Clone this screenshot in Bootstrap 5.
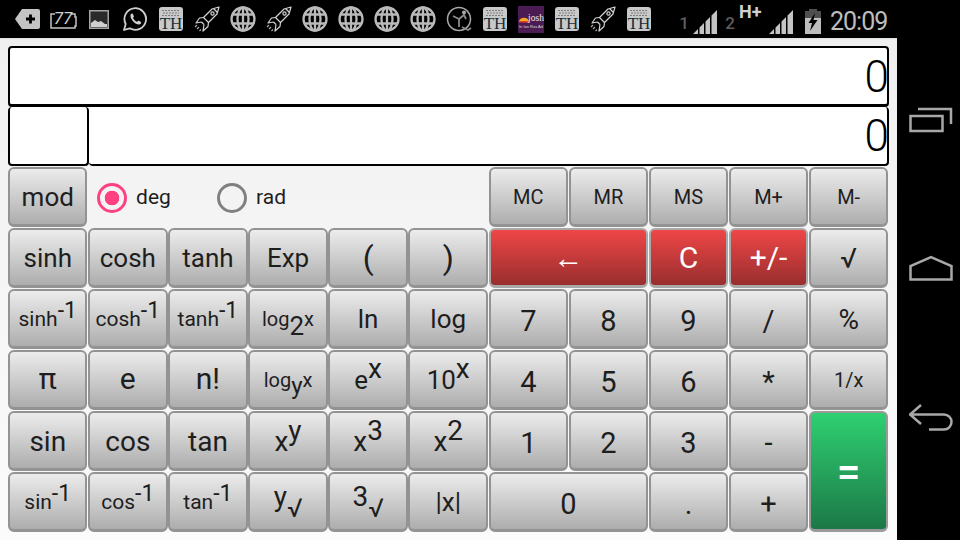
<!DOCTYPE html>
<html lang="en">
<head>
<meta charset="UTF-8" />
<meta name="viewport" content="width=device-width, initial-scale=1" />
<title>Calculator</title>
<link href="https://cdn.jsdelivr.net/npm/bootstrap@5.3.0/dist/css/bootstrap.min.css" rel="stylesheet" />
<style>
  html, body { width: 960px; height: 540px; overflow: hidden; background: #000; }
  body { font-family: Roboto, "Liberation Sans", sans-serif; color: #1e1e1e; }
  .status-bar { height: 38px; background: #000; padding-left: 9px; }
  .st-slot { width: 36px; height: 38px; }
  .st-slot svg { display: block; }
  .sig-num { width: 10px; font-size: 17px; font-weight: 500; color: #5e5e5e; line-height: 1; text-align: center; }
  .sig-first { margin-left: 22px; }
  .net-type { font-size: 18px; font-weight: 700; color: #d0d0d0; line-height: 1; width: 26px; margin-top: -14px; }
  .batt { margin-left: 12px; }
  .clock { font-size: 25px; letter-spacing: -1px; color: #bdbdbd; line-height: 1; width: 60px; margin-left: 9px; }
  .app-area { width: 897px; height: 502px; padding: 8px 8px 0; background: linear-gradient(#f0f0f0, #fbfbfb); box-shadow: inset 0 3px 2px -2px #ddd; }
  .nav-rail { width: 63px; height: 502px; background: #000; }
  .nav-rail svg { display: block; }
  .nav-slot { position: absolute; left: 12px; }
  .nav-recent { top: 69px; }
  .nav-home { top: 217px; }
  .nav-back { top: 366px; }
  .readout { background: #fff; border: 2px solid #000; border-radius: 4px; font-size: 44px; font-weight: 300; color: #000; line-height: 1; letter-spacing: -2px; text-align: right; }
  .readout-top { height: 61px; border-bottom-width: 3px; padding-top: 7px; }
  .readout-row { height: 59px; margin-bottom: 1px; }
  .readout-row .readout { border-top: 0; padding-top: 7px; }
  .readout-tag { width: 81px; }
  .readout-main { border-left: 0; }
  .key-grid { display: grid; grid-template-columns: repeat(11, 1fr); grid-auto-rows: 61px; margin-top: -.4px; }
  .key { display: flex; align-items: center; justify-content: center; padding: 2px 0 0; margin: 0 .6px 1px 0; font-size: 26px; line-height: 1; color: #1e1e1e; border: 2px solid #939393; border-bottom-width: 3px; border-radius: 6px; background: linear-gradient(#ececec, #adadad); white-space: nowrap; }
  .key:hover { color: #1e1e1e; border-color: #939393; }
  .key-sm { font-size: 20px; }
  .key-inv { font-size: 21px; }
  .key-mid { font-size: 28px; padding-top: 4px; }
  .key-big { font-size: 30px; padding-top: 0; }
  .key-num { font-size: 29px; padding-top: 7px; }
  .key-paren { font-size: 32px; }
  .key-wide { grid-column: span 2; }
  .key-red { color: #fff; font-size: 30px; background: linear-gradient(#ef4646, #992e2e); border-color: #a9a9a9; }
  .key-red:hover { color: #fff; }
  .key-green { grid-row: span 2; color: #fff; font-size: 42px; font-weight: 500; background: linear-gradient(#2fd072, #1c7847); border-color: #9a9a9a; }
  .key-green:hover { color: #fff; }
  .key sup, .key sub { font-size: 28px; line-height: 0; position: static; }
  .key sup { vertical-align: 11px; }
  .key .sup-mid { font-size: 23px; vertical-align: 8px; }
  .key .sub-two { font-size: 26px; vertical-align: -9px; }
  .key .sub-y { font-size: 24px; vertical-align: -7px; }
  .key-root { padding: 0 0 8px; }
  .key .sub-root { font-size: 26px; vertical-align: -11px; }
  .mode-cell { grid-column: span 5; padding: 2px 0 0 9px; font-size: 21px; }
  .mode-opt { width: 120px; }
  .mode-dot.form-check-input { width: 30px; height: 30px; margin: 0 9px 0 0; float: none; flex: none; background: transparent; border: 3px solid #808080; }
  .mode-dot.form-check-input:checked { border-color: #ff4081; background-color: transparent; background-image: radial-gradient(circle, #ff4081 7px, transparent 7.6px); }
  .mode-dot.form-check-input:focus { box-shadow: none; }
  .icon-defs { position: absolute; }
</style>
</head>
<body>
<svg width="0" height="0" class="icon-defs">
  <defs>
    <symbol id="i-th" viewBox="0 0 24 24">
      <rect width="24" height="24" rx="3" fill="#c9c9c9"/>
      <path d="M3 3.500h18M4 6h16M3 8.500h18" stroke="#7d7d7d" stroke-width="1" stroke-dasharray="2 1"/>
      <text x="12" y="22" text-anchor="middle" font-family="Liberation Serif" font-size="17" fill="#12303a">TH</text>
    </symbol>
    <symbol id="i-rocket" viewBox="0 0 26 26">
      <g fill="none" stroke="#d2d2d2" stroke-width="1.200" stroke-linejoin="round">
        <path d="M25 1 18 3 9.500 11.500 14.500 16.500 23 8Z"/>
        <path d="M9.500 11.500 5.500 12 2 17 7.500 16M14.500 16.500 14 20.500 9 25 10 18.500M7.500 16 10 18.500"/>
        <path d="M19.500 2.500 23.500 6.500"/>
        <circle cx="18.500" cy="7.500" r="1.600"/>
      </g>
      <path d="M1 21l2-2M3 23l2-2M5.500 25l1.500-1.500" stroke="#aaa" stroke-width="1.200"/>
    </symbol>
    <symbol id="i-globe" viewBox="0 0 26 26">
      <g fill="none" stroke="#bababa" stroke-width="2.300">
        <circle cx="13" cy="13" r="11.500"/>
        <ellipse cx="13" cy="13" rx="5.500" ry="11.500"/>
        <path d="M2.500 8.500h21M2.500 17.500h21M13 1.500v23"/>
      </g>
    </symbol>
  </defs>
</svg>

<div class="status-bar d-flex align-items-center">
  <div class="st-slot d-flex align-items-center justify-content-center">
    <svg width="25" height="20" viewBox="0 0 25 20"><path d="M7 0H23a2 2 0 0 1 2 2V18a2 2 0 0 1-2 2H7L0 10Z" fill="#c4c4c4"/><path d="M11 10h9M15.500 5.500v9" stroke="#000" stroke-width="2.800"/></svg>
  </div>
  <div class="st-slot d-flex align-items-center justify-content-center">
    <svg width="27" height="20" viewBox="0 0 27 20"><path d="M5 5H1V19H25V17H26V8H25V5H21" fill="none" stroke="#c4c4c4" stroke-width="1.500"/><text x="13" y="15" text-anchor="middle" font-family="Roboto" font-style="italic" font-size="17" fill="#d0d0d0">77</text></svg>
  </div>
  <div class="st-slot d-flex align-items-center justify-content-center">
    <svg width="20" height="19" viewBox="0 0 20 19"><rect x=".75" y=".75" width="18.500" height="17.500" fill="#2a2a2a" stroke="#a5a5a5" stroke-width="1.500"/><path d="M2 17V13L6 10 9 12 12 11 16 14 18 14V17Z" fill="#cfcfcf"/></svg>
  </div>
  <div class="st-slot d-flex align-items-center justify-content-center">
    <svg width="24" height="24" viewBox="0 0 24 24"><path d="M1 23 2.700 17A10.800 10.800 0 1 1 6.800 21.300Z" fill="none" stroke="#cfcfcf" stroke-width="1.800" stroke-linejoin="round"/><path d="M8.500 6.500C7 7.500 7 10 9 13S14 17.500 16 17.500C17.500 17.500 18.500 16 18 15L15.500 13.500 14 14.800C12.500 14.500 10.500 12.500 10 10.800L11 9.500 9.800 6.800Z" fill="#cfcfcf"/></svg>
  </div>
  <div class="st-slot d-flex align-items-center justify-content-center"><svg width="24" height="24"><use href="#i-th"/></svg></div>
  <div class="st-slot d-flex align-items-center justify-content-center"><svg width="26" height="26"><use href="#i-rocket"/></svg></div>
  <div class="st-slot d-flex align-items-center justify-content-center"><svg width="26" height="26"><use href="#i-globe"/></svg></div>
  <div class="st-slot d-flex align-items-center justify-content-center"><svg width="26" height="26"><use href="#i-rocket"/></svg></div>
  <div class="st-slot d-flex align-items-center justify-content-center"><svg width="26" height="26"><use href="#i-globe"/></svg></div>
  <div class="st-slot d-flex align-items-center justify-content-center"><svg width="26" height="26"><use href="#i-globe"/></svg></div>
  <div class="st-slot d-flex align-items-center justify-content-center"><svg width="26" height="26"><use href="#i-globe"/></svg></div>
  <div class="st-slot d-flex align-items-center justify-content-center"><svg width="26" height="26"><use href="#i-globe"/></svg></div>
  <div class="st-slot d-flex align-items-center justify-content-center">
    <svg width="27" height="27" viewBox="0 0 27 27"><circle cx="13" cy="13" r="11.500" fill="none" stroke="#a8a8a8" stroke-width="1.500"/><path d="M7 10 13 13V21M13 13 18 9 20 13M16 21 22 24 25 22" fill="none" stroke="#8c8c8c" stroke-width="1.800"/><circle cx="18" cy="6.500" r="2" fill="#a8a8a8"/></svg>
  </div>
  <div class="st-slot d-flex align-items-center justify-content-center"><svg width="24" height="24"><use href="#i-th"/></svg></div>
  <div class="st-slot d-flex align-items-center justify-content-center">
    <svg width="26" height="27" viewBox="0 0 26 27"><rect width="26" height="27" fill="#4b1c53"/><path d="M1 15a5.500 5.500 0 0 1 10 0Z" fill="#f2a91f"/><path d="M1 15h10v1.500H1Z" fill="#e5452a"/><text x="18" y="15" text-anchor="middle" font-family="Liberation Serif" font-size="9.500" fill="#eee">josh</text><text x="13" y="22" text-anchor="middle" font-family="Liberation Sans" font-size="4" fill="#ddd">In Ian Ros Ad</text></svg>
  </div>
  <div class="st-slot d-flex align-items-center justify-content-center"><svg width="24" height="24"><use href="#i-th"/></svg></div>
  <div class="st-slot d-flex align-items-center justify-content-center"><svg width="26" height="26"><use href="#i-rocket"/></svg></div>
  <div class="st-slot d-flex align-items-center justify-content-center"><svg width="24" height="24"><use href="#i-th"/></svg></div>
  <div class="sig-num sig-first mt-2">1</div>
  <svg class="ms-1 mt-1" width="24" height="25" viewBox="0 0 24 25"><path d="M0 25 5 20V25ZM6.500 25V18.500L11 14V25ZM12.500 25V12.500L17 8V25ZM18.500 25V6.500L24 1V25Z" fill="#c4c4c4"/></svg>
  <div class="sig-num ms-2 mt-2">2</div>
  <div class="net-type ms-1">H+</div>
  <svg class="ms-1 mt-1" width="24" height="25" viewBox="0 0 24 25"><path d="M0 25 5 20V25ZM6.500 25V18.500L11 14V25ZM12.500 25V12.500L17 8V25ZM18.500 25V6.500L24 1V25Z" fill="#c4c4c4"/></svg>
  <svg class="batt mt-1" width="16" height="25" viewBox="0 0 16 25"><path d="M4 0H12V2H16V25H0V2H4Z" fill="#4f4f4f"/><path d="M0 9H16V25H0Z" fill="#bdbdbd"/><path d="M10 4 3.500 14H7L5 22 12.500 11H8.500Z" fill="#000"/></svg>
  <div class="clock mt-1">20:09</div>
</div>

<div class="d-flex">
  <main class="app-area">
    <div class="readout readout-top">0</div>
    <div class="readout-row d-flex">
      <div class="readout readout-tag"></div>
      <div class="readout readout-main flex-grow-1">0</div>
    </div>
    <div class="key-grid">
      <button class="btn key">mod</button>
      <div class="mode-cell d-flex align-items-center">
        <label class="mode-opt d-flex align-items-center"><input class="form-check-input mode-dot" type="radio" name="angle" checked />deg</label>
        <label class="mode-opt d-flex align-items-center"><input class="form-check-input mode-dot" type="radio" name="angle" />rad</label>
      </div>
      <button class="btn key key-sm">MC</button>
      <button class="btn key key-sm">MR</button>
      <button class="btn key key-sm">MS</button>
      <button class="btn key key-sm">M+</button>
      <button class="btn key key-sm">M-</button>

      <button class="btn key">sinh</button>
      <button class="btn key">cosh</button>
      <button class="btn key">tanh</button>
      <button class="btn key">Exp</button>
      <button class="btn key key-paren">(</button>
      <button class="btn key key-paren">)</button>
      <button class="btn key key-red key-wide">←</button>
      <button class="btn key key-red">C</button>
      <button class="btn key key-red">+/-</button>
      <button class="btn key key-mid">√</button>

      <button class="btn key key-inv"><span>sinh<sup class="sup-mid">-1</sup></span></button>
      <button class="btn key key-inv"><span>cosh<sup class="sup-mid">-1</sup></span></button>
      <button class="btn key key-inv"><span>tanh<sup class="sup-mid">-1</sup></span></button>
      <button class="btn key key-sm"><span>log<sub class="sub-two">2</sub>x</span></button>
      <button class="btn key">ln</button>
      <button class="btn key">log</button>
      <button class="btn key key-num">7</button>
      <button class="btn key key-num">8</button>
      <button class="btn key key-num">9</button>
      <button class="btn key key-num">/</button>
      <button class="btn key key-mid">%</button>

      <button class="btn key key-big">π</button>
      <button class="btn key key-big">e</button>
      <button class="btn key key-big">n!</button>
      <button class="btn key key-sm"><span>log<sub class="sub-y">y</sub>x</span></button>
      <button class="btn key"><span>e<sup>x</sup></span></button>
      <button class="btn key"><span>10<sup>x</sup></span></button>
      <button class="btn key key-num">4</button>
      <button class="btn key key-num">5</button>
      <button class="btn key key-num">6</button>
      <button class="btn key key-num">*</button>
      <button class="btn key key-sm">1/x</button>

      <button class="btn key key-mid">sin</button>
      <button class="btn key key-mid">cos</button>
      <button class="btn key key-mid">tan</button>
      <button class="btn key key-mid"><span>x<sup>y</sup></span></button>
      <button class="btn key key-mid"><span>x<sup>3</sup></span></button>
      <button class="btn key key-mid"><span>x<sup>2</sup></span></button>
      <button class="btn key key-num">1</button>
      <button class="btn key key-num">2</button>
      <button class="btn key key-num">3</button>
      <button class="btn key key-num">-</button>
      <button class="btn key key-green">=</button>

      <button class="btn key key-inv"><span>sin<sup class="sup-mid">-1</sup></span></button>
      <button class="btn key key-inv"><span>cos<sup class="sup-mid">-1</sup></span></button>
      <button class="btn key key-inv"><span>tan<sup class="sup-mid">-1</sup></span></button>
      <button class="btn key key-mid key-root"><span>y<sub class="sub-root">√</sub></span></button>
      <button class="btn key key-mid key-root"><span>3<sub class="sub-root">√</sub></span></button>
      <button class="btn key">|x|</button>
      <button class="btn key key-num key-wide">0</button>
      <button class="btn key key-num">.</button>
      <button class="btn key key-num">+</button>
    </div>
  </main>
  <aside class="nav-rail position-relative">
    <svg class="nav-slot nav-recent" width="44" height="26" viewBox="0 0 44 26"><path d="M9 2H42V17" fill="none" stroke="#a8a8a8" stroke-width="2.500"/><rect x="1.500" y="9" width="32" height="15" fill="none" stroke="#a8a8a8" stroke-width="2.500"/></svg>
    <svg class="nav-slot nav-home" width="44" height="26" viewBox="0 0 44 26"><path d="M1.500 24.500V11L22 2 42.500 11V24.500Z" fill="none" stroke="#a8a8a8" stroke-width="2.500"/></svg>
    <svg class="nav-slot nav-back" width="46" height="28" viewBox="0 0 46 28"><path d="M12 1 1 10.500 12 20M1 10.500H35A7.500 7.500 0 0 1 35 25.500H20" fill="none" stroke="#a8a8a8" stroke-width="2.500"/></svg>
  </aside>
</div>

<script src="https://cdn.jsdelivr.net/npm/bootstrap@5.3.0/dist/js/bootstrap.bundle.min.js"></script>
</body>
</html>
